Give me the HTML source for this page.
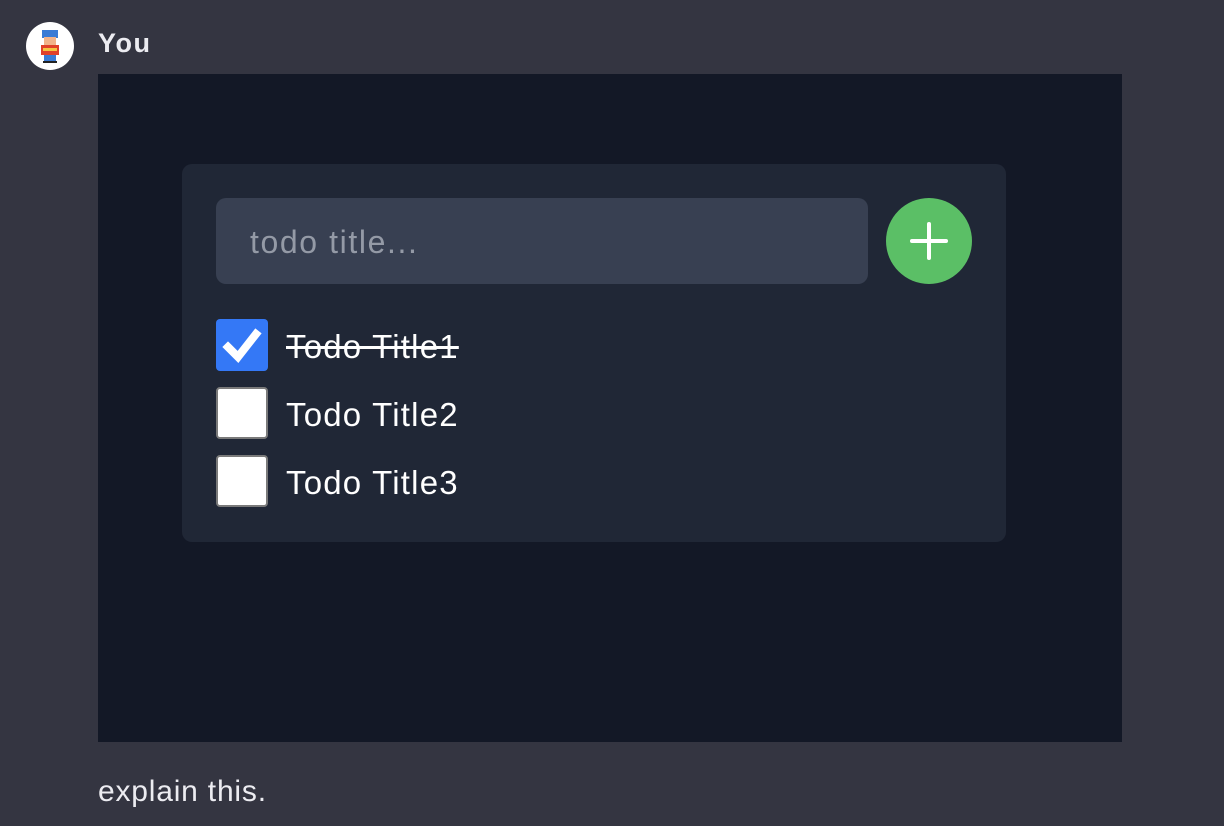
<!DOCTYPE html>
<html><head><style>
body{margin:0;width:1224px;height:826px;background:#343541;font-family:"Liberation Sans",sans-serif;position:relative;overflow:hidden}
.av{position:absolute;left:26px;top:22px;width:48px;height:48px;border-radius:50%;background:#fff}
.you{position:absolute;left:98px;top:28px;color:#ececf1;font-weight:bold;font-size:27px;letter-spacing:1.5px}
.shot{position:absolute;left:98px;top:74px;width:1024px;height:668px;background:#131826}
.card{position:absolute;left:84px;top:90px;width:824px;height:378px;background:#202736;border-radius:10px}
.inp{position:absolute;left:34px;top:34px;width:652px;height:86px;background:#384052;border-radius:10px;color:#949aa6;font-size:32px;line-height:88px;padding-left:34px;box-sizing:border-box;letter-spacing:1.6px}
.plus{position:absolute;left:704px;top:34px;width:86px;height:86px;border-radius:50%;background:#5bbf66}
.plus:before{content:"";position:absolute;left:24px;top:41px;width:38px;height:4px;background:#fff;border-radius:2px}
.plus:after{content:"";position:absolute;left:41px;top:24px;width:4px;height:38px;background:#fff;border-radius:2px}
.row{position:absolute;left:34px;height:52px;display:flex;align-items:center}
.cb{width:48px;height:48px;border:2px solid #7a7a7a;background:#fff;border-radius:4px;box-sizing:border-box}
.cb.on{background:#3478f6;border:none;width:52px;height:52px}
.t{color:#fff;font-size:33px;margin-left:18px;letter-spacing:1.2px;position:relative;top:2px}
.txt{position:absolute;left:98px;top:775px;color:#ececf1;font-size:30px;letter-spacing:0.8px}
</style></head><body>
<div class="av"><svg width="48" height="48" viewBox="0 0 48 48"><rect x="16" y="8" width="16" height="8" fill="#3a7bd5"/><rect x="18" y="15" width="12" height="8" fill="#f2b38a"/><rect x="15" y="23" width="18" height="10" fill="#e0402a"/><rect x="17" y="26" width="14" height="3" fill="#f5c542"/><rect x="18" y="33" width="12" height="6" fill="#3a7bd5"/><rect x="17" y="39" width="14" height="2" fill="#222"/></svg></div>
<div class="you">You</div>
<div class="shot"><div class="card">
<div class="inp">todo title...</div>
<div class="plus"></div>
<div class="row" style="top:155px"><div class="cb on"><svg width="52" height="52" viewBox="0 0 52 52"><path d="M12 28 L22 38 L40 15" stroke="#fff" stroke-width="8" fill="none" stroke-linecap="square"/></svg></div><span class="t" style="text-decoration:line-through">Todo Title1</span></div>
<div class="row" style="top:223px"><div class="cb" style="width:52px;height:52px"></div><span class="t">Todo Title2</span></div>
<div class="row" style="top:291px"><div class="cb" style="width:52px;height:52px"></div><span class="t">Todo Title3</span></div>
</div></div>
<div class="txt">explain this.</div>
</body></html>
